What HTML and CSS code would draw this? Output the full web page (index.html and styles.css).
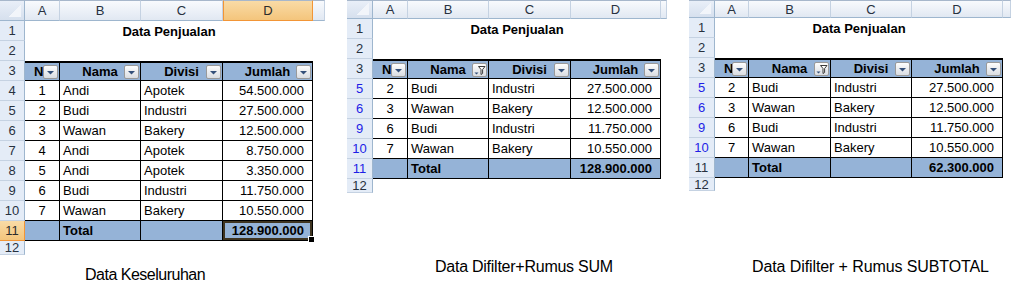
FILE: index.html
```html
<!DOCTYPE html>
<html lang="id">
<head>
<meta charset="utf-8">
<title>Data Penjualan</title>
<link rel="stylesheet" href="styles.css">
</head>
<body>
<main class="page">
  <section class="panel">
    <div class="sheet sheet-full">
      <div class="corner"></div><div class="ch">A</div><div class="ch">B</div><div class="ch">C</div><div class="ch ch-sel">D</div><div class="ch"></div>
      <div class="rh">1</div><div class="title">Data Penjualan</div>
      <div class="rh">2</div>
      <div class="rh">3</div>
      <div class="th th-n">N<span class="dd"><svg viewBox="0 0 13 12" width="13" height="12"><path d="M3 5h7l-3.5 3.5z" fill="#34507a"/></svg></span></div>
      <div class="th">Nama<span class="dd"><svg viewBox="0 0 13 12" width="13" height="12"><path d="M3 5h7l-3.5 3.5z" fill="#34507a"/></svg></span></div>
      <div class="th">Divisi<span class="dd"><svg viewBox="0 0 13 12" width="13" height="12"><path d="M3 5h7l-3.5 3.5z" fill="#34507a"/></svg></span></div>
      <div class="th">Jumlah<span class="dd"><svg viewBox="0 0 13 12" width="13" height="12"><path d="M3 5h7l-3.5 3.5z" fill="#34507a"/></svg></span></div>
      <div class="rh">4</div><div class="td ctr">1</div><div class="td">Andi</div><div class="td">Apotek</div><div class="td num">54.500.000</div>
      <div class="rh">5</div><div class="td ctr">2</div><div class="td">Budi</div><div class="td">Industri</div><div class="td num">27.500.000</div>
      <div class="rh">6</div><div class="td ctr">3</div><div class="td">Wawan</div><div class="td">Bakery</div><div class="td num">12.500.000</div>
      <div class="rh">7</div><div class="td ctr">4</div><div class="td">Andi</div><div class="td">Apotek</div><div class="td num">8.750.000</div>
      <div class="rh">8</div><div class="td ctr">5</div><div class="td">Andi</div><div class="td">Apotek</div><div class="td num">3.350.000</div>
      <div class="rh">9</div><div class="td ctr">6</div><div class="td">Budi</div><div class="td">Industri</div><div class="td num">11.750.000</div>
      <div class="rh">10</div><div class="td ctr">7</div><div class="td">Wawan</div><div class="td">Bakery</div><div class="td num">10.550.000</div>
      <div class="rh rh-sel">11</div><div class="tt"></div><div class="tt">Total</div><div class="tt"></div><div class="tt num tt-sel">128.900.000</div>
      <div class="rh">12</div>
    </div>
    <p class="caption caption-full">Data Keseluruhan</p>
  </section>

  <section class="panel">
    <div class="sheet sheet-sum">
      <div class="corner"></div><div class="ch">A</div><div class="ch">B</div><div class="ch">C</div><div class="ch">D</div><div class="ch"></div>
      <div class="rh">1</div><div class="title">Data Penjualan</div>
      <div class="rh">2</div>
      <div class="rh">3</div>
      <div class="th th-n">N<span class="dd"><svg viewBox="0 0 13 12" width="13" height="12"><path d="M3 5h7l-3.5 3.5z" fill="#34507a"/></svg></span></div>
      <div class="th">Nama<span class="dd"><svg viewBox="0 0 13 12" width="13" height="12"><path d="M1.5 8.5h4l-2 2z" fill="#34507a"/><path d="M5.5 2.5h6.5l-2.4 3v4l-1.6 1v-5z" fill="#fff" stroke="#3a3a3a" stroke-width="1" stroke-linejoin="round"/></svg></span></div>
      <div class="th">Divisi<span class="dd"><svg viewBox="0 0 13 12" width="13" height="12"><path d="M3 5h7l-3.5 3.5z" fill="#34507a"/></svg></span></div>
      <div class="th">Jumlah<span class="dd"><svg viewBox="0 0 13 12" width="13" height="12"><path d="M3 5h7l-3.5 3.5z" fill="#34507a"/></svg></span></div>
      <div class="rh rh-flt">5</div><div class="td ctr">2</div><div class="td">Budi</div><div class="td">Industri</div><div class="td num">27.500.000</div>
      <div class="rh rh-flt">6</div><div class="td ctr">3</div><div class="td">Wawan</div><div class="td">Bakery</div><div class="td num">12.500.000</div>
      <div class="rh rh-flt">9</div><div class="td ctr">6</div><div class="td">Budi</div><div class="td">Industri</div><div class="td num">11.750.000</div>
      <div class="rh rh-flt">10</div><div class="td ctr">7</div><div class="td">Wawan</div><div class="td">Bakery</div><div class="td num">10.550.000</div>
      <div class="rh rh-flt">11</div><div class="tt"></div><div class="tt">Total</div><div class="tt"></div><div class="tt num">128.900.000</div>
      <div class="rh">12</div>
    </div>
    <p class="caption caption-sum">Data Difilter+Rumus SUM</p>
  </section>

  <section class="panel">
    <div class="sheet sheet-sub">
      <div class="corner"></div><div class="ch">A</div><div class="ch">B</div><div class="ch">C</div><div class="ch">D</div><div class="ch"></div>
      <div class="rh">1</div><div class="title">Data Penjualan</div>
      <div class="rh">2</div>
      <div class="rh">3</div>
      <div class="th th-n">N<span class="dd"><svg viewBox="0 0 13 12" width="13" height="12"><path d="M3 5h7l-3.5 3.5z" fill="#34507a"/></svg></span></div>
      <div class="th">Nama<span class="dd"><svg viewBox="0 0 13 12" width="13" height="12"><path d="M1.5 8.5h4l-2 2z" fill="#34507a"/><path d="M5.5 2.5h6.5l-2.4 3v4l-1.6 1v-5z" fill="#fff" stroke="#3a3a3a" stroke-width="1" stroke-linejoin="round"/></svg></span></div>
      <div class="th">Divisi<span class="dd"><svg viewBox="0 0 13 12" width="13" height="12"><path d="M3 5h7l-3.5 3.5z" fill="#34507a"/></svg></span></div>
      <div class="th">Jumlah<span class="dd"><svg viewBox="0 0 13 12" width="13" height="12"><path d="M3 5h7l-3.5 3.5z" fill="#34507a"/></svg></span></div>
      <div class="rh rh-flt">5</div><div class="td ctr">2</div><div class="td">Budi</div><div class="td">Industri</div><div class="td num">27.500.000</div>
      <div class="rh rh-flt">6</div><div class="td ctr">3</div><div class="td">Wawan</div><div class="td">Bakery</div><div class="td num">12.500.000</div>
      <div class="rh rh-flt">9</div><div class="td ctr">6</div><div class="td">Budi</div><div class="td">Industri</div><div class="td num">11.750.000</div>
      <div class="rh rh-flt">10</div><div class="td ctr">7</div><div class="td">Wawan</div><div class="td">Bakery</div><div class="td num">10.550.000</div>
      <div class="rh">11</div><div class="tt"></div><div class="tt">Total</div><div class="tt"></div><div class="tt num">62.300.000</div>
      <div class="rh">12</div>
    </div>
    <p class="caption caption-sub">Data Difilter + Rumus SUBTOTAL</p>
  </section>
</main>
</body>
</html>
```

FILE: styles.css
```css
html, body {
  margin: 0;
  padding: 0;
  background: #ffffff;
}

.page {
  display: grid;
  grid-template-columns: 325px 320px 322px;
  column-gap: 22px;
  align-items: start;
}

.panel {
  display: flex;
  flex-direction: column;
}

.sheet {
  display: grid;
  overflow: hidden;
  font-family: "Liberation Sans", Arial, sans-serif;
  font-size: 13px;
  color: #000;
}

.sheet-full {
  grid-template-columns: 25px 35px 81px 82px 90px 12px;
  grid-template-rows: 21px repeat(11, 20px) 14px;
}

.sheet-sum {
  grid-template-columns: 26px 35px 81px 82px 90px 6px;
  grid-template-rows: 19px repeat(8, 20px) 14px;
}

.sheet-sub {
  grid-template-columns: 26px 34px 82px 81px 91px 8px;
  grid-template-rows: 18px repeat(8, 20px) 13px;
}

.sheet > div {
  box-sizing: border-box;
  display: flex;
  align-items: center;
  white-space: nowrap;
  overflow: hidden;
}

/* column headers */
.corner {
  position: relative;
  background: linear-gradient(#e9eff8, #d6e0ee);
  border-right: 1px solid #9eb6ce;
  border-bottom: 1px solid #9eb6ce;
  border-top: 1px solid #a7b7cb;
}
.corner::after {
  content: "";
  position: absolute;
  right: 3px;
  bottom: 3px;
  width: 12px;
  height: 12px;
  background: linear-gradient(135deg, transparent 50%, #f2f5fa 50%);
}

.ch {
  justify-content: center;
  background: linear-gradient(#f8fafd, #e1e8f2);
  border-right: 1px solid #c5d2e2;
  border-bottom: 1px solid #9eb6ce;
  border-top: 1px solid #a7b7cb;
  color: #27313f;
}

.ch-sel {
  background: linear-gradient(#f9dba6, #f4c57c);
  border-right: 1px solid #f29536;
  border-bottom: 1px solid #f29536;
  border-left: 1px solid #f29536;
  color: #2b2b2b;
}

/* row headers */
.rh {
  grid-column: 1;
  justify-content: center;
  background: #e4ecf7;
  border-right: 1px solid #9eb6ce;
  border-bottom: 1px solid #c5d2e2;
  color: #27313f;
}

.rh-flt {
  color: #1e1ee6;
}

.rh-sel {
  background: linear-gradient(#f9dba6, #f4c57c);
  border-right: 1px solid #f29536;
  border-bottom: 1px solid #f29536;
  color: #2b2b2b;
}

.title {
  grid-column: 2 / 6;
  justify-content: center;
  font-weight: bold;
}

/* table header */
.th {
  position: relative;
  justify-content: center;
  background: #95b3d7;
  font-weight: bold;
  border-top: 2px solid #000;
  border-right: 1px solid #000;
  border-bottom: 1px solid #000;
}

.th-n {
  justify-content: flex-start;
  padding-left: 9px;
}

.dd {
  position: absolute;
  right: 1px;
  top: 2px;
  width: 15px;
  height: 14px;
  box-sizing: border-box;
  border: 1px solid #9a9a9a;
  border-radius: 2px;
  background: linear-gradient(#fdfdfd, #dadde2);
  display: flex;
  align-items: center;
  justify-content: center;
}

.dd svg {
  display: block;
}

/* body cells */
.td,
.tt {
  padding: 0 3px;
  border-right: 1px solid #000;
  border-bottom: 1px solid #000;
}

.td {
  background: #fff;
}

.tt {
  background: #95b3d7;
  font-weight: bold;
}

.ctr {
  justify-content: center;
}

.num {
  justify-content: flex-end;
  padding-right: 8px;
}

.sheet > .tt-sel {
  position: relative;
  overflow: visible;
  box-shadow: inset 0 0 0 2px #3e3421;
}
.tt-sel::after {
  content: "";
  position: absolute;
  right: -3px;
  bottom: -3px;
  width: 5px;
  height: 5px;
  background: #000;
  border: 1px solid #fff;
}

/* captions */
.caption {
  margin: 0;
  font-family: "Liberation Sans", Arial, sans-serif;
  font-size: 16px;
  line-height: 18px;
  letter-spacing: -0.5px;
  color: #000;
}

.caption-full {
  margin-top: 11px;
  padding-left: 85px;
}

.caption-sum {
  margin-top: 65px;
  padding-left: 88px;
  letter-spacing: -0.25px;
}

.caption-sub {
  margin-top: 67px;
  padding-left: 63px;
  letter-spacing: -0.1px;
}
```
